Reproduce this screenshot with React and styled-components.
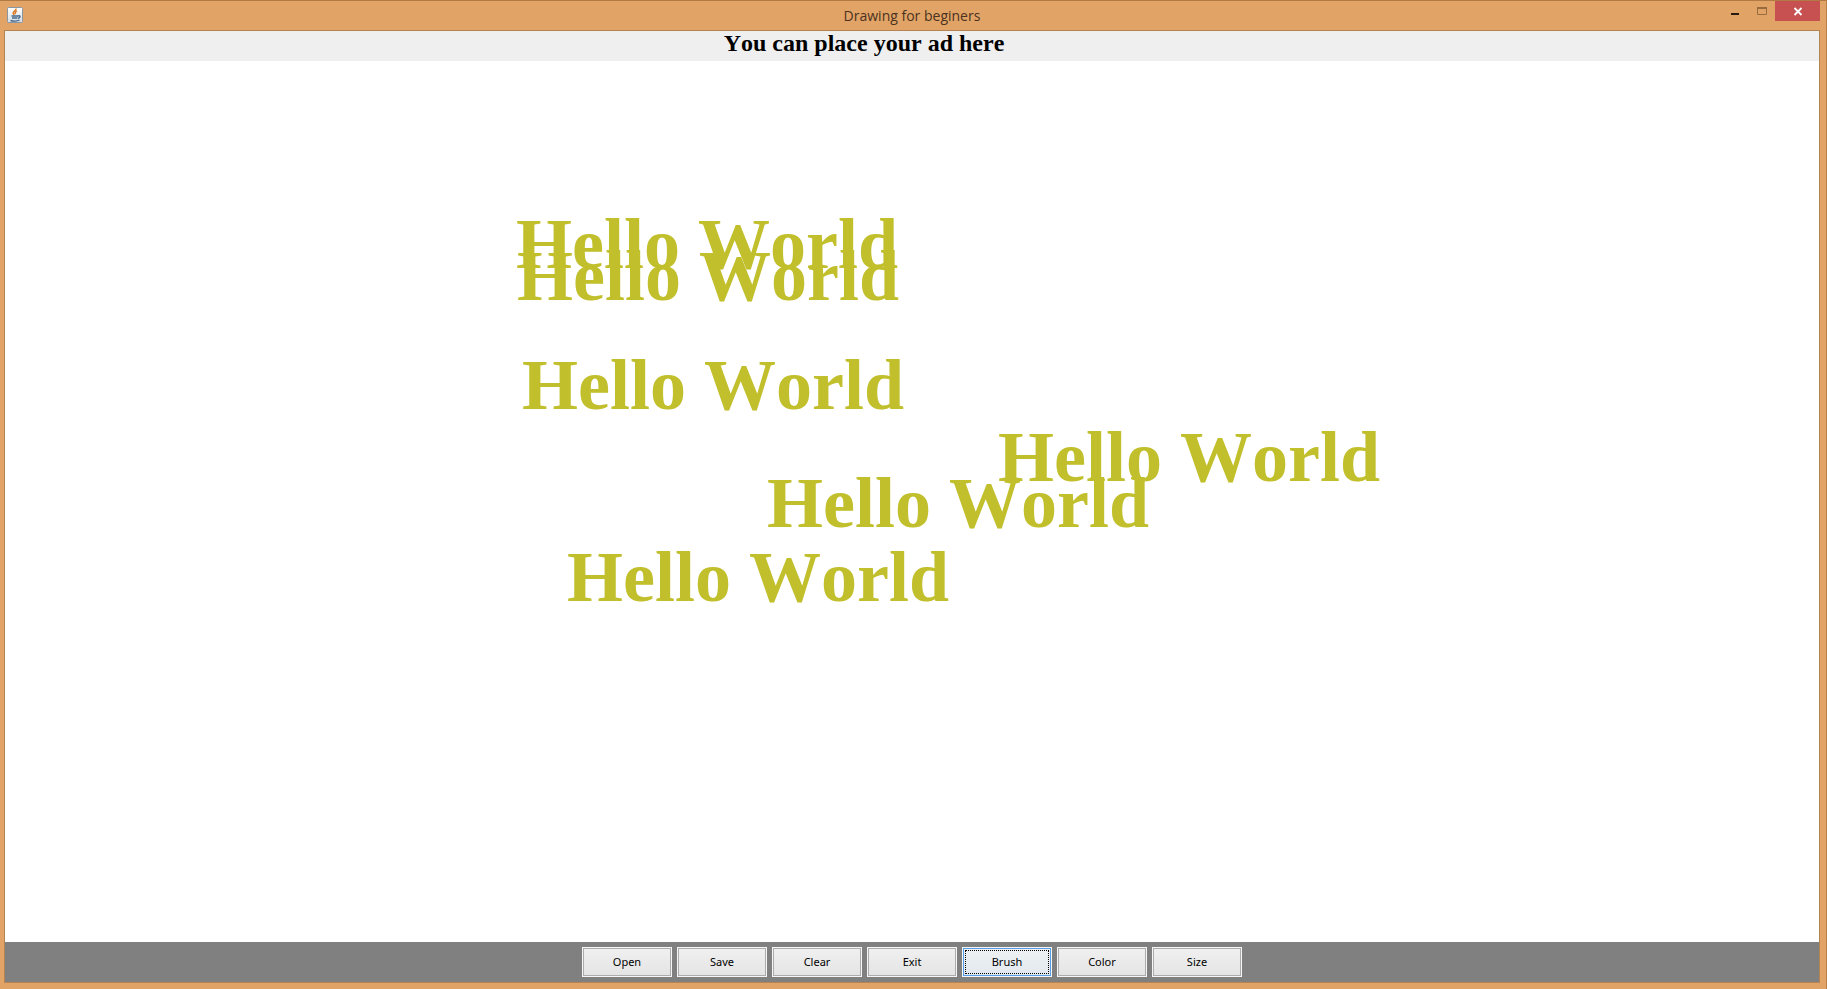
import React from "react";
import styled, { createGlobalStyle } from "styled-components";

const GlobalStyle = createGlobalStyle`
  * { box-sizing: border-box; }
  body { margin: 0; }
`;

const Window = styled.div`
  display: flex;
  flex-direction: column;
  min-height: 100vh;
  padding: 0 6px 6px 4px;
  background: #e2a366;
  border-top: 1px solid #b17a45;
  border-right: 1px solid #b98049;
`;

const TitleBar = styled.header`
  display: grid;
  grid-template-columns: 1fr auto 1fr;
  height: 29px;
`;

const AppIcon = styled.svg`
  width: 16px;
  height: 16px;
  margin: 6px 0 0 3px;
`;

const Title = styled.h1`
  margin: 0;
  font: 400 14px/29px "Open Sans", "Noto Sans", sans-serif;
  color: #4a3220;
`;

const WindowControls = styled.div`
  display: flex;
  justify-content: flex-end;
`;

const ControlButton = styled.button`
  display: block;
  width: ${(p) => (p.$close ? 45 : 27)}px;
  height: 20px;
  padding: 0;
  border: 0;
  background: ${(p) => (p.$close ? "#c75050" : "transparent")};

  svg {
    display: block;
    width: 100%;
    height: 20px;
  }
`;

const Content = styled.main`
  flex: 1;
  display: flex;
  flex-direction: column;
  border: 1px solid #b58452;
`;

const AdBanner = styled.p`
  margin: 0;
  height: 30px;
  padding-right: 96px;
  background: #efefef;
  text-align: center;
  font: 700 24px/24px "Liberation Serif", serif;
  font-kerning: none;
  white-space: nowrap;
  color: #000;
`;

const Canvas = styled.section`
  position: relative;
  flex: 1;
  overflow: hidden;
  background: #fff;
`;

const Stamp = styled.span`
  position: absolute;
  left: ${(p) => p.$x}px;
  top: ${(p) => p.$y}px;
  font: 700 72px/72px "Liberation Serif", serif;
  font-kerning: none;
  white-space: nowrap;
  color: #c1bf2b;
`;

const Toolbar = styled.nav`
  display: flex;
  justify-content: center;
  gap: 5px;
  height: 40px;
  padding: 5px 0;
  background: #808080;
`;

const ToolButton = styled.button`
  display: grid;
  width: 90px;
  height: 30px;
  padding: 1px;
  border: 1px solid #f6f6f6;
  outline: 1px solid ${(p) => (p.$active ? "#569de5" : "#acacac")};
  outline-offset: -2px;
  background: ${(p) =>
    p.$active
      ? "linear-gradient(#eff2f4, #e1e8ee)"
      : "linear-gradient(#f0f0f0, #e4e4e4)"};
  font: 400 11px/22px "Noto Sans", sans-serif;
  color: #000;
`;

const ToolLabel = styled.span`
  margin: 1px;
  border: 1px dotted ${(p) => (p.$active ? "#000" : "transparent")};
`;

const stamps = [
  { x: 511, y: 147 },
  { x: 512, y: 179 },
  { x: 517, y: 288 },
  { x: 993, y: 360 },
  { x: 762, y: 406 },
  { x: 562, y: 480 },
];

const tools = ["Open", "Save", "Clear", "Exit", "Brush", "Color", "Size"];

export default function App() {
  return (
    <>
      <GlobalStyle />
      <Window>
        <TitleBar>
          <AppIcon viewBox="0 0 16 16" aria-hidden="true">
            <defs>
              <linearGradient id="tile" x2="0" y2="1">
                <stop stopColor="#fff" />
                <stop offset="1" stopColor="#d4dce4" />
              </linearGradient>
            </defs>
            <rect x=".5" y=".5" width="15" height="15" rx="1" fill="url(#tile)" stroke="#8997a5" />
            <path d="M9 1.5C9.5 4 5 4.2 6.3 6.5L7.2 8M10 4C7.5 5 7.8 5.8 8.7 7" fill="none" stroke="#dc7b28" strokeWidth="1.5" />
            <path d="M4.5 9H11M5 11H10.5M3.5 13.5C6 14.3 10.5 14.2 12.5 13M11 9C14 8 13.5 11 11 11.3" fill="none" stroke="#47698c" strokeWidth="1.4" />
          </AppIcon>
          <Title>Drawing for beginers</Title>
          <WindowControls>
            <ControlButton type="button" aria-label="Minimize">
              <svg viewBox="0 0 27 20"><path d="M10 12h8v2h-8z" fill="#271b11" /></svg>
            </ControlButton>
            <ControlButton type="button" aria-label="Maximize">
              <svg viewBox="0 0 27 20"><path d="M9.5 7v6.5h9V7" fill="none" stroke="#986b3f" /><path d="M9 6h10v2H9z" fill="#986b3f" /></svg>
            </ControlButton>
            <ControlButton type="button" $close aria-label="Close">
              <svg viewBox="0 0 45 20"><path d="M19.5 7l7 7M26.5 7l-7 7" fill="none" stroke="#fff" strokeWidth="1.8" /></svg>
            </ControlButton>
          </WindowControls>
        </TitleBar>
        <Content>
          <AdBanner>You can place your ad here</AdBanner>
          <Canvas aria-label="Drawing">
            {stamps.map((s) => (
              <Stamp key={`${s.x}-${s.y}`} $x={s.x} $y={s.y}>Hello World</Stamp>
            ))}
          </Canvas>
          <Toolbar aria-label="Tools">
            {tools.map((name) => (
              <ToolButton key={name} type="button" $active={name === "Brush"}>
                <ToolLabel $active={name === "Brush"}>{name}</ToolLabel>
              </ToolButton>
            ))}
          </Toolbar>
        </Content>
      </Window>
    </>
  );
}
